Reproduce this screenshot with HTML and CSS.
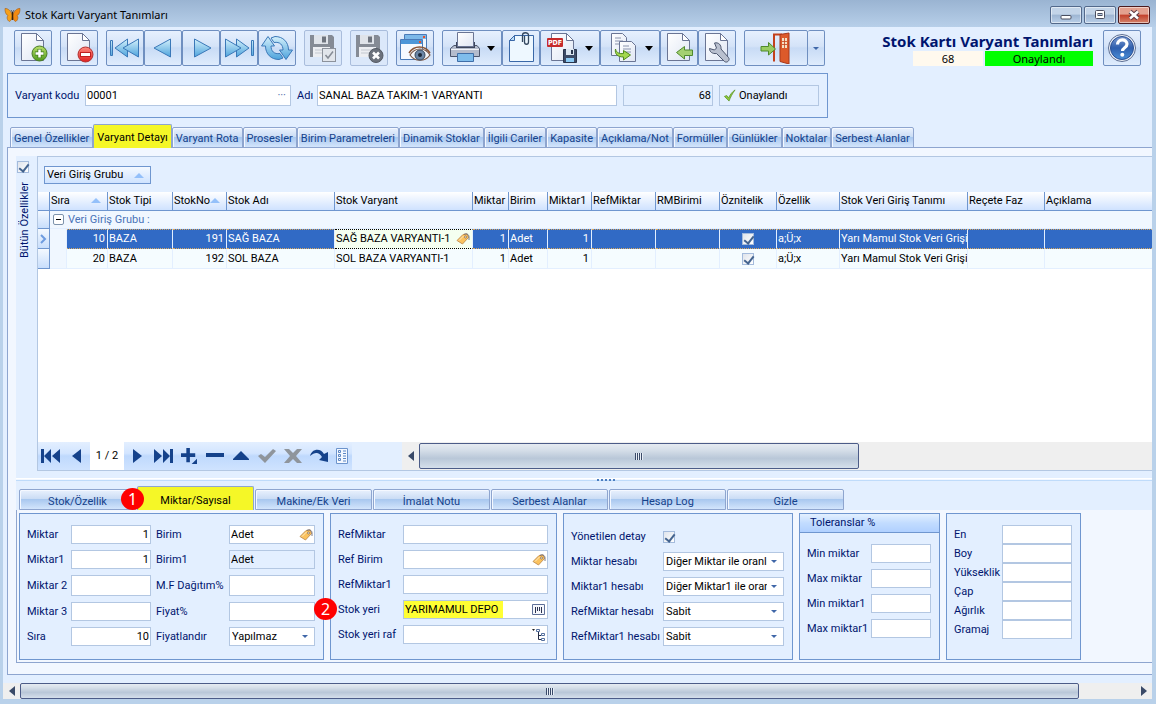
FILE: index.html
```html
<!DOCTYPE html>
<html lang="tr">
<head>
<meta charset="utf-8">
<title>Stok Kartı Varyant Tanımları</title>
<link rel="stylesheet" href="styles.css">
</head>
<body>
<svg class="defs" width="0" height="0" aria-hidden="true">
  <defs>
    <linearGradient id="page" x1="0" y1="0" x2="1" y2="1"><stop offset="0" stop-color="#fff"/><stop offset="1" stop-color="#dfe6f4"/></linearGradient>
    <linearGradient id="blue" x1="0" y1="0" x2="0" y2="1"><stop offset="0" stop-color="#d4f0fb"/><stop offset="1" stop-color="#4da3dc"/></linearGradient>
    <linearGradient id="green" x1="0" y1="0" x2="0" y2="1"><stop offset="0" stop-color="#b9e06a"/><stop offset="1" stop-color="#4f9a1c"/></linearGradient>
    <linearGradient id="red" x1="0" y1="0" x2="0" y2="1"><stop offset="0" stop-color="#ff8a80"/><stop offset="1" stop-color="#e02020"/></linearGradient>
    <linearGradient id="help" x1="0" y1="0" x2="0" y2="1"><stop offset="0" stop-color="#7d9bd0"/><stop offset=".5" stop-color="#2f5fae"/><stop offset="1" stop-color="#4a8fd8"/></linearGradient>
    <symbol id="sheet" viewBox="0 0 32 32"><path d="M4.500 1.500h15l7 7v20h-22z" fill="url(#page)" stroke="#6a7594"/><path d="M19.500 1.500v7h7z" fill="#fff" stroke="#6a7594"/></symbol>
    <symbol id="tag" viewBox="0 0 14 12"><path d="M1 7.500L7 1.500l4-.5 1.500 3.500-6 6.500z" fill="#fbc25e" stroke="#b98448" stroke-width=".8"/><path d="M3 7.500l4.500-4.500" stroke="#fdebc0"/><circle cx="9.500" cy="4" r="1" fill="#fff" stroke="#5c4a3a" stroke-width=".6"/><path d="M8 1.500c2-1.500 5-.5 5 2.500v3" fill="none" stroke="#5a5a6a" stroke-width=".8"/></symbol>
    <symbol id="floppy" viewBox="0 0 26 26"><path d="M1 1h22l2 2v20H1z" fill="#858b95"/><path d="M5 1h14v9H5z" fill="#dfe3e9"/><path d="M13 2.500h4v6h-4z" fill="#6e747e"/><path d="M4 13h17v10H4z" fill="#eceef2"/><path d="M6 16h12M6 19h12" stroke="#c3c8d0"/></symbol>
  </defs>
</svg>

<header class="titlebar">
  <svg class="logo" viewBox="0 0 16 16"><path d="M8 9C7 4 3 1 .5 1.500c0 3 .5 6 3 7C2 10 2.500 13.500 5 14.500 7 13.500 7.500 11 8 9z" fill="#f6a01a" stroke="#a35a10" stroke-width=".6"/><path d="M8 9c1-5 5-8 7.500-7.500 0 3-.5 6-3 7 1.500 1.500 1 5-1.500 6C9 13.500 8.500 11 8 9z" fill="#f28a12" stroke="#a35a10" stroke-width=".6"/><path d="M8 5v8" stroke="#3c2208" stroke-width="1.500" fill="none"/><path d="M6.500 3L8 5.500 9.500 3" stroke="#3c2208" stroke-width=".6" fill="none"/></svg>
  <span class="caption">Stok Kartı Varyant Tanımları</span>
  <div class="winbtns">
    <button class="winbtn" aria-label="Simge durumuna küçült"><svg viewBox="0 0 30 16"><rect x="10" y="8.500" width="10" height="3.500" rx="1" fill="#fff" stroke="#4a4f60"/></svg></button>
    <button class="winbtn" aria-label="Ekranı kapla"><svg viewBox="0 0 30 16"><rect x="10.500" y="3.500" width="9" height="8" rx="1" fill="#fff" stroke="#4a4f60"/><rect x="13" y="6.500" width="4" height="2" fill="#b7cbe3" stroke="#4a4f60"/></svg></button>
    <button class="winbtn close" aria-label="Kapat"><svg viewBox="0 0 30 16"><path d="M11 4.500l8 7M19 4.500l-8 7" stroke="#5a3a44" stroke-width="4.500"/><path d="M11 4.500l8 7M19 4.500l-8 7" stroke="#fff" stroke-width="2.500"/></svg></button>
  </div>
</header>

<main class="client">
  <div class="toolbar">
    <div class="group"><button class="tool" aria-label="Yeni"><svg viewBox="0 0 32 32"><use href="#sheet" width="32" height="32"/><circle cx="22.500" cy="21.500" r="7.500" fill="url(#green)" stroke="#4a7a2a"/><path d="M22.500 17v9M18 21.500h9" stroke="#3f7a18" stroke-width="4"/><path d="M22.500 17.500v8M18.500 21.500h8" stroke="#fff" stroke-width="2.500"/></svg></button></div>
    <div class="group"><button class="tool" aria-label="Sil"><svg viewBox="0 0 32 32"><use href="#sheet" width="32" height="32"/><circle cx="22.500" cy="22.500" r="7.500" fill="url(#red)" stroke="#b03030"/><rect x="17.500" y="20.500" width="10" height="4" fill="#fff" stroke="#c02020"/></svg></button></div>
    <div class="group">
      <button class="tool" aria-label="İlk"><svg viewBox="0 0 32 32"><g fill="url(#blue)" stroke="#3a78b8"><path d="M1.500 8.500h2v15h-2zM18.500 7v18L6 16z"/><path d="M29.500 7v18L14 16z"/></g></svg></button>
      <button class="tool" aria-label="Önceki"><svg viewBox="0 0 32 32"><path d="M23.500 7v18L7 16z" fill="url(#blue)" stroke="#3a78b8"/></svg></button>
      <button class="tool" aria-label="Sonraki"><svg viewBox="0 0 32 32"><path d="M9.500 7v18L26 16z" fill="url(#blue)" stroke="#3a78b8"/></svg></button>
      <button class="tool" aria-label="Son"><svg viewBox="0 0 32 32"><g fill="url(#blue)" stroke="#3a78b8"><path d="M28.500 8.500h2v15h-2zM13.500 7v18L26 16z"/><path d="M2.500 7v18L18 16z"/></g></svg></button>
      <button class="tool" aria-label="Yenile"><svg viewBox="0 0 32 32"><g fill="url(#blue)" stroke="#3a78b8" stroke-linejoin="round"><path d="M7 4.500L.5 14h4C4.500 22 10 27.500 18 27.500l4-1.500-3-4.500c-6 1-9-2.500-9-7.500h3.500z"/><path d="M25 27.500l6.500-9.500h-4C27.500 10 22 4.500 14 4.500L10 6l3 4.500c6-1 9 2.500 9 7.500h-3.500z"/></g></svg></button>
    </div>
    <div class="group"><button class="tool dim" aria-label="Kaydet" disabled><svg viewBox="0 0 32 32"><use href="#floppy" x="2" y="2" width="26" height="26"/><rect x="15.500" y="16.500" width="13" height="13" fill="#e1e5eb" stroke="#8c929c"/><path d="M18.500 23l2.500 3 5-6.500" fill="none" stroke="#858b95" stroke-width="1.500"/></svg></button></div>
    <div class="group"><button class="tool dim" aria-label="Vazgeç" disabled><svg viewBox="0 0 32 32"><use href="#floppy" x="2" y="2" width="26" height="26"/><circle cx="23" cy="23.500" r="7" fill="#6c727c" stroke="#555b65"/><path d="M20 20.500l6 6M26 20.500l-6 6" stroke="#fff" stroke-width="2.500"/></svg></button></div>
    <div class="group"><button class="tool" aria-label="Önizle"><svg viewBox="0 0 32 32"><path d="M5.500 2.500h22v20h-22z" fill="#eef6fd" stroke="#4a7ab8"/><path d="M6 3h21v4H6z" fill="#7db8e8"/><path d="M1.500 7.500h22v20h-22z" fill="#f6faff" stroke="#4a7ab8"/><path d="M2 8h21v4H2z" fill="#4d97d8"/><path d="M24 4h2v2h-2zM20 9h2v2h-2z" fill="#e8502a"/><path d="M11 23c5-8 15-8 20 0-5 7-15 7-20 0z" fill="#f4f6fa" stroke="#7e5a48" stroke-width="1.200"/><path d="M10 21c5-8 16-8 21 0" fill="none" stroke="#8a5638" stroke-width="1.500"/><circle cx="21" cy="23" r="5" fill="#6b86a6" stroke="#34465c"/><circle cx="21" cy="23" r="2" fill="#1c2838"/></svg></button></div>
    <div class="group">
      <button class="tool wide" aria-label="Yazdır"><svg viewBox="0 0 32 32"><path d="M5 13.500h23l2.500 3v8h-29v-8z" fill="#b4bccd" stroke="#4c566e"/><path d="M7 10h19v6H7z" fill="#3c465c"/><path d="M8.500.5h16v14h-16z" fill="url(#page)" stroke="#6a7594"/><path d="M2 17.500h28" stroke="#f0f3f8"/><path d="M8.500 21.500h16v8h-16z" fill="#7fbdec" stroke="#3f6ea8"/></svg><i class="caret"></i></button>
      <button class="tool" aria-label="Ekler"><svg viewBox="0 0 32 32"><path d="M9.500 3.500h19v26h-24v-21z" fill="#eef8ff" stroke="#3a68a8"/><path d="M9.500 3.500v5h-5z" fill="#bcdcf4" stroke="#3a68a8"/><path d="M19.500 4v6c0 3 4 3 4 0V3c0-3-6-3-6 0v7" fill="none" stroke="#33475f" stroke-width="1.300"/></svg></button>
      <button class="tool wide" aria-label="PDF kaydet"><svg viewBox="0 0 32 32"><use href="#sheet" width="32" height="32"/><rect x="0" y="6" width="16" height="9" rx="1" fill="#c62a2a"/><text x="8" y="13" class="pdf">PDF</text><path d="M16.500 17.500h13v13h-13z" fill="#3c4a66" stroke="#28344c"/><path d="M19 17h8v6h-8z" fill="#dbe6f2"/><path d="M19 26h8v4h-8z" fill="#8ccaf4"/><path d="M24 18h2v4h-2z" fill="#28344c"/></svg><i class="caret"></i></button>
      <button class="tool wide" aria-label="Kopyala"><svg viewBox="0 0 32 32"><path d="M4.500 1.500h11l4 4v18h-15z" fill="url(#page)" stroke="#6a7594"/><path d="M8 6h6M8 9h8M8 12h8" stroke="#8a93ac"/><path d="M12.500 9.500h12l4 4v16h-16z" fill="url(#page)" stroke="#6a7594"/><path d="M16 14h6M16 17h8M16 20h8" stroke="#8a93ac"/><path d="M8.500 17c1 4 4 5 8 4.500v-3l7 4.500-7 5v-3c-6 0-9-3-8-8z" fill="#a4d84e" stroke="#4f8a1c"/></svg><i class="caret"></i></button>
      <button class="tool" aria-label="İçe aktar"><svg viewBox="0 0 32 32"><use href="#sheet" width="32" height="32"/><path d="M13.500 20.500l8-6v3.500h8v5.500h-8v3.500z" fill="#a4d072" stroke="#4f8a2c"/></svg></button>
      <button class="tool" aria-label="Ayarlar"><svg viewBox="0 0 32 32"><use href="#sheet" width="32" height="32"/><path d="M8.500 16.500l5 1.500 2-2-2-5c4-1 7 2 6.500 6l7.500 8.500c2 2.500-1.500 6-4 4l-8-8c-4 .5-7-1.500-7-5z" fill="#b9c0cf" stroke="#4c566e" stroke-linejoin="round"/></svg></button>
    </div>
    <div class="group">
      <button class="tool exit" aria-label="Çıkış"><svg viewBox="0 0 32 32"><path d="M14 29.500V2.500h8" fill="none" stroke="#c4411c" stroke-width="2"/><path d="M20 2.500l9-1.500v31l-9-2.500z" fill="#dc5a2a" stroke="#a8381a"/><path d="M22 6h5v10h-5z" fill="#f6e0c4"/><path d="M24.500 6v10M22 9.500h5M22 12.500h5" stroke="#c4411c" stroke-width=".8"/><path d="M1 14.500h7.500v-4l7 6.500-7 6v-4H1z" fill="#98cc62" stroke="#4f8a2c"/></svg></button>
      <button class="tool drop" aria-label="Çıkış seçenekleri"><i class="caret small"></i></button>
    </div>
    <div class="status">
      <h1>Stok Kartı Varyant Tanımları</h1>
      <div class="badges"><span class="num">68</span><span class="ok">Onaylandı</span></div>
    </div>
    <button class="tool help" aria-label="Yardım"><svg viewBox="0 0 32 32"><circle cx="16" cy="16" r="13.500" fill="#eef2f8" stroke="#5a6c92"/><circle cx="16" cy="16" r="11.500" fill="url(#help)" stroke="#2a4f94"/><path d="M11.500 12.500c0-6 9.500-6 9.500-.5 0 4-4.500 3.500-4.500 7" fill="none" stroke="#fff" stroke-width="3.200"/><circle cx="16.300" cy="22.800" r="2" fill="#fff"/></svg></button>
  </div>

  <section class="keybox">
    <label for="kod">Varyant kodu</label>
    <div class="field kod"><input id="kod" value="00001"><span class="dots">···</span></div>
    <label for="adi">Adı</label>
    <div class="field adi"><input id="adi" value="SANAL BAZA TAKIM-1 VARYANTI"></div>
    <div class="field ro no"><input class="right" value="68" readonly aria-label="Numara"></div>
    <div class="field ro onay"><svg viewBox="0 0 14 14"><path d="M1.500 8l2.500-1 2 2.500C8 5.500 10 3 13 1c-3 4-5 8-6.500 12z" fill="#8cc63c" stroke="#5c9426" stroke-width=".8"/></svg><span>Onaylandı</span></div>
  </section>

  <nav class="tabs">
    <button class="tab">Genel Özellikler</button><button class="tab active">Varyant Detayı</button><button class="tab">Varyant Rota</button><button class="tab">Prosesler</button><button class="tab">Birim Parametreleri</button><button class="tab">Dinamik Stoklar</button><button class="tab">İlgili Cariler</button><button class="tab">Kapasite</button><button class="tab">Açıklama/Not</button><button class="tab">Formüller</button><button class="tab">Günlükler</button><button class="tab">Noktalar</button><button class="tab">Serbest Alanlar</button>
  </nav>

  <section class="page">
    <div class="upper">
      <div class="side"><input type="checkbox" id="all" checked><label for="all">Bütün Özellikler</label></div>
      <div class="gridbox">
        <div class="grouppanel"><button class="groupby">Veri Giriş Grubu <i class="sort"></i></button></div>
        <div class="gridbody">
          <table class="grid">
            <colgroup><col class="w12"><col class="w17"><col class="w41"><col class="w65"><col class="w54"><col class="w108"><col class="w138"><col class="w36"><col class="w39"><col class="w44"><col class="w64"><col class="w64"><col class="w57"><col class="w63"><col class="w128"><col class="w77"><col></colgroup>
            <thead><tr><th></th><th colspan="2" class="sorted">Sıra<i class="sort"></i></th><th>Stok Tipi</th><th class="sorted">StokNo<i class="sort"></i></th><th>Stok Adı</th><th>Stok Varyant</th><th>Miktar</th><th>Birim</th><th>Miktar1</th><th>RefMiktar</th><th>RMBirimi</th><th>Öznitelik</th><th>Özellik</th><th>Stok Veri Giriş Tanımı</th><th>Reçete Faz</th><th>Açıklama</th></tr></thead>
            <tbody>
              <tr class="grouprow"><td class="ind"></td><td colspan="16"><div class="grouphead"><button class="toggle" aria-label="Daralt"></button>Veri Giriş Grubu :</div></td></tr>
              <tr class="selected"><td class="ind"><svg viewBox="0 0 8 10"><path d="M2 1l4 4-4 4" fill="none" stroke="#6d9be0" stroke-width="2"/></svg></td><td class="gap"></td><td class="r">10</td><td>BAZA</td><td class="r">191</td><td>SAĞ BAZA</td><td class="focus"><div class="withicon">SAĞ BAZA VARYANTI-1<svg class="tagicon"><use href="#tag"/></svg></div></td><td class="r">1</td><td>Adet</td><td class="r">1</td><td></td><td></td><td class="c"><input type="checkbox" checked aria-label="Öznitelik"></td><td>a;Ü;x</td><td>Yarı Mamul Stok Veri Grişi</td><td></td><td></td></tr>
              <tr class="plain"><td class="ind"></td><td class="gap"></td><td class="r">20</td><td>BAZA</td><td class="r">192</td><td>SOL BAZA</td><td>SOL BAZA VARYANTI-1</td><td class="r">1</td><td>Adet</td><td class="r">1</td><td></td><td></td><td class="c"><input type="checkbox" checked aria-label="Öznitelik"></td><td>a;Ü;x</td><td>Yarı Mamul Stok Veri Grişi</td><td></td><td></td></tr>
            </tbody>
          </table>
        </div>
        <div class="footer">
          <div class="navigator">
            <button aria-label="İlk kayıt"><svg viewBox="0 0 20 16"><path d="M0 1h3v14H0zM3 8l7-7v14zM11 8l8-7v14z"/></svg></button>
            <button aria-label="Önceki kayıt"><svg viewBox="0 0 20 16"><path d="M5 8l9-7v14z"/></svg></button>
            <span class="pos">1 / 2</span>
            <button aria-label="Sonraki kayıt"><svg viewBox="0 0 20 16"><path d="M15 8L6 1v14z"/></svg></button>
            <button aria-label="Son kayıt"><svg viewBox="0 0 20 16"><path d="M17 1h3v14h-3zM17 8l-7-7v14zM9 8L1 1v14z"/></svg></button>
            <button aria-label="Ekle"><svg viewBox="0 0 20 18"><path d="M7 0h4v6h6v4h-6v6H7v-6H1V6h6zM19 12v6h-6z"/></svg></button>
            <button aria-label="Çıkar"><svg viewBox="0 0 20 16"><path d="M1 5h18v4H1z"/></svg></button>
            <button aria-label="Düzenle"><svg viewBox="0 0 20 16"><path d="M10 3l8 8v1H2v-1z"/></svg></button>
            <button class="off" aria-label="Onayla"><svg viewBox="0 0 20 16"><path d="M1 8l3-2 4 3 8-8 3 2-11 12z"/></svg></button>
            <button class="off" aria-label="İptal"><svg viewBox="0 0 20 16"><path d="M1 1h5l4 4 4-4h5l-6 7 6 7h-5l-4-4-4 4H1l6-7z"/></svg></button>
            <button aria-label="Yenile"><svg viewBox="0 0 20 16"><path d="M1 8C3 0 12 0 15 6l4-2v10l-9-2 3-3C10 4 6 4 1 8z"/></svg></button>
            <button class="last" aria-label="Görünüm"><svg viewBox="0 0 20 16"><path d="M4.500.5h11v15h-11z" fill="#f4f8ff" stroke="#6d94cc"/><path d="M6.500 2.500h2v2h-2zM6.500 6.500h2v2h-2zM6.500 10.500h2v2h-2zM11 3h3M11 5.500h3M11 8h3M11 10.500h3M11 13h3" fill="none" stroke="#5b86c4"/></svg></button>
          </div>
          <div class="hscroll inner"><button class="arrow" aria-label="Sola kaydır"><svg viewBox="0 0 6 10"><path d="M6 0v10L0 5z"/></svg></button><div class="track"><div class="thumb"><i class="grip"></i></div></div></div>
        </div>
      </div>
    </div>

    <div class="splitter"><i></i><i></i><i></i><i></i><i></i></div>

    <nav class="tabs lower">
      <button class="tab">Stok/Özellik</button><button class="tab active">Miktar/Sayısal</button><button class="tab">Makine/Ek Veri</button><button class="tab">İmalat Notu</button><button class="tab">Serbest Alanlar</button><button class="tab">Hesap Log</button><button class="tab">Gizle</button>
      <span class="marker one">1</span>
    </nav>
    <div class="forms">
      <fieldset class="box qty">
        <label for="m0">Miktar</label><div class="field"><input id="m0" class="right" value="1"></div>
        <label for="b0">Birim</label><div class="field"><input id="b0" value="Adet"><svg class="tagicon"><use href="#tag"/></svg></div>
        <label for="m1">Miktar1</label><div class="field"><input id="m1" class="right" value="1"></div>
        <label for="b1">Birim1</label><div class="field ro"><input id="b1" value="Adet" readonly></div>
        <label for="m2">Miktar 2</label><div class="field"><input id="m2"></div>
        <label for="mf">M.F Dağıtım%</label><div class="field"><input id="mf"></div>
        <label for="m3">Miktar 3</label><div class="field"><input id="m3"></div>
        <label for="fy">Fiyat%</label><div class="field"><input id="fy"></div>
        <label for="sr">Sıra</label><div class="field"><input id="sr" class="right" value="10"></div>
        <label for="fl">Fiyatlandır</label><div class="field pick"><select id="fl"><option>Yapılmaz</option></select><i class="caret small"></i></div>
      </fieldset>
      <fieldset class="box ref">
        <label for="r0">RefMiktar</label><div class="field"><input id="r0"></div>
        <label for="r1">Ref Birim</label><div class="field"><input id="r1"><svg class="tagicon"><use href="#tag"/></svg></div>
        <label for="r2">RefMiktar1</label><div class="field"><input id="r2"></div>
        <label for="r3">Stok yeri</label><div class="field"><input id="r3" class="marked" value="YARIMAMUL DEPO"><svg class="fieldicon" viewBox="0 0 14 12"><path d="M.5.5h12v10H.5z" fill="#f5f7fc" stroke="#5f7098"/><path d="M3.500 3v6M5.500 3v4M7.500 3v4M9.500 3v6" stroke="#2c3350"/></svg></div>
        <label for="r4">Stok yeri raf</label><div class="field"><input id="r4"><svg class="fieldicon" viewBox="0 0 14 12"><path d="M0 0h3L1.500 2z" fill="#222"/><path d="M6.500 2v8.500H9M6.500 6.500H9" fill="none" stroke="#222b44"/><path d="M4.500.5h3v2h-3zM9.500 4.500h3v2h-3zM9.500 9.500h3v2h-3z" fill="#fff" stroke="#55709f"/></svg></div>
        <span class="marker two">2</span>
      </fieldset>
      <fieldset class="box calc">
        <label for="yd">Yönetilen detay</label><div><input type="checkbox" id="yd" checked></div>
        <label for="h0">Miktar hesabı</label><div class="field pick"><select id="h0"><option>Diğer Miktar ile oranlı</option></select><i class="caret small"></i></div>
        <label for="h1">Miktar1 hesabı</label><div class="field pick"><select id="h1"><option>Diğer Miktar1 ile oranlı</option></select><i class="caret small"></i></div>
        <label for="h2">RefMiktar hesabı</label><div class="field pick"><select id="h2"><option>Sabit</option></select><i class="caret small"></i></div>
        <label for="h3">RefMiktar1 hesabı</label><div class="field pick"><select id="h3"><option>Sabit</option></select><i class="caret small"></i></div>
      </fieldset>
      <section class="box tol">
        <h2>Toleranslar %</h2>
        <div class="tolgrid">
          <label for="t0">Min miktar</label><div class="field"><input id="t0"></div>
          <label for="t1">Max miktar</label><div class="field"><input id="t1"></div>
          <label for="t2">Min miktar1</label><div class="field"><input id="t2"></div>
          <label for="t3">Max miktar1</label><div class="field"><input id="t3"></div>
        </div>
      </section>
      <fieldset class="box dim3">
        <label for="d0">En</label><div class="field"><input id="d0"></div>
        <label for="d1">Boy</label><div class="field"><input id="d1"></div>
        <label for="d2">Yükseklik</label><div class="field"><input id="d2"></div>
        <label for="d3">Çap</label><div class="field"><input id="d3"></div>
        <label for="d4">Ağırlık</label><div class="field"><input id="d4"></div>
        <label for="d5">Gramaj</label><div class="field"><input id="d5"></div>
      </fieldset>
    </div>
  </section>

  <div class="hscroll outer"><button class="arrow" aria-label="Sola kaydır"><svg viewBox="0 0 6 10"><path d="M6 0v10L0 5z"/></svg></button><div class="track"><div class="thumb"><i class="grip"></i></div></div><button class="arrow" aria-label="Sağa kaydır"><svg viewBox="0 0 6 10"><path d="M0 0v10l6-5z"/></svg></button></div>
</main>
</body>
</html>
```

FILE: styles.css
```css
* { box-sizing: border-box; }
body {
  --line: #8ea5cf;
  --box: #6f96cf;
  --edge: #b3c7e2;
  --pale: #e3efff;
  --navy: #00156e;
  margin: 0;
  min-height: 100vh;
  display: flex;
  flex-direction: column;
  background: #b9d1ea;
  font: 11px/14px Roboto, Tahoma, sans-serif;
  color: #000;
}
button, input, select { font: inherit; color: inherit; margin: 0; }
button { padding: 0; border: 0; background: none; }
.defs { position: absolute; }

.titlebar {
  display: flex;
  align-items: center;
  height: 27px;
  padding: 3px 6px 0 4px;
  background: linear-gradient(#9ab4d2, #b7cfe9);
}
.logo { width: 17px; height: 16px; }
.caption { flex: 1; padding-left: 4px; font-family: "Noto Sans", sans-serif; }
.winbtns { display: flex; gap: 2px; }
.winbtn {
  width: 32px;
  height: 18px;
  border: 1px solid #53698b;
  border-radius: 2px;
  box-shadow: inset 0 0 0 1px rgba(255,255,255,.5);
  background: linear-gradient(#c3d4e8 45%, #9db5d2 50%, #b9cfe8);
}
.winbtn.close { border-color: #4b1a1e; background: linear-gradient(#e3a08f 45%, #c3402b 50%, #d4836a); }
.winbtn svg { display: block; width: 30px; height: 16px; }

.client {
  flex: 1;
  display: flex;
  flex-direction: column;
  margin: 0 4px 5px 3px;
  background: var(--pale);
}
.toolbar { display: flex; gap: 8px; padding: 3px 11px 7px 11px; }
.group { display: flex; }
.tool {
  display: flex;
  align-items: center;
  justify-content: center;
  width: 38px;
  height: 36px;
  border: 1px solid #6f8fc0;
  border-radius: 2px;
  background: linear-gradient(#e6f0fe, #d4e3f8 45%, #c8dbf5 50%, #dfecfd);
}
.tool svg { width: 32px; height: 32px; }
.tool.wide { width: 60px; gap: 6px; }
.tool.exit { width: 64px; }
.tool.drop { width: 17px; border-left: 0; }
.tool.dim { border-color: #a9bddc; background: #dbe8fa; }
.pdf { font: bold 7px "DejaVu Sans Condensed", sans-serif; fill: #fff; text-anchor: middle; }
.caret { width: 0; height: 0; border: 4px solid transparent; border-top: 5px solid #000; border-bottom: 0; }
.caret.small { border-width: 3px 3px 0; border-top-color: #3f67a8; }
.status { margin-left: auto; margin-right: 2px; text-align: right; }
.status h1 { margin: 0; padding-top: 2px; font: bold 15px/19px "Noto Sans", sans-serif; color: var(--navy); }
.badges { display: flex; gap: 2px; justify-content: flex-end; text-align: center; line-height: 15px; font-family: "Noto Sans", sans-serif; }
.num { width: 70px; background: #fff9ee; }
.ok { width: 108px; background: #00ff00; }

.keybox {
  display: flex;
  align-items: center;
  gap: 6px;
  align-self: flex-start;
  height: 45px;
  margin-left: 4px;
  padding: 0 8px 0 7px;
  border: 1px solid var(--box);
}
label { color: var(--navy); white-space: nowrap; }
.keybox label { width: 14px; }
.keybox label:first-child { width: 64px; }
.keybox .field { height: 21px; }
.field {
  display: flex;
  align-items: center;
  border: 1px solid var(--edge);
  background: #fff;
  min-width: 0;
}
.field.ro { background: var(--pale); }
.field input { flex: 1; min-width: 0; width: 100%; height: 100%; padding: 0 1px 0 1px; border: 0; background: none; outline: 0; }
.field input.right { text-align: right; }
.field.kod { width: 206px; }
.field.adi { width: 300px; }
.field.no { width: 90px; }
.field.onay { width: 100px; padding-left: 3px; gap: 3px; }
.onay svg { width: 13px; height: 13px; }
.dots { padding-right: 4px; color: #3f67a8; }

.tabs {
  position: relative;
  z-index: 1;
  display: flex;
  align-items: flex-end;
  height: 24px;
  margin: 6px 0 -1px 7px;
}
.tab {
  height: 21px;
  padding: 2px 3px 0;
  border: 1px solid var(--line);
  border-radius: 2px 2px 0 0;
  box-shadow: inset 1px 1px 0 #f4f8ff;
  background: linear-gradient(#e9f1fd, #cbddf5 45%, #a9c8ef 50%, #d3e5fc);
  color: #15428b;
  white-space: nowrap;
}
.tab.active {
  height: 24px;
  border-bottom: 0;
  background: #f5f727;
  color: #000;
  box-shadow: none;
}
.page {
  flex: 1;
  display: flex;
  flex-direction: column;
  margin: 0 0 8px 4px;
  padding: 8px 0 11px 8px;
  border: 1px solid var(--line);
  border-right: 0;
  background: #f2f7ff;
}
.upper { flex: 1; display: flex; min-height: 0; background: var(--pale); }
.side { display: flex; flex-direction: column; align-items: center; gap: 9px; width: 21px; padding: 5px 8px 0 0; }
.side label { writing-mode: vertical-rl; transform: rotate(180deg); margin-left: 4px; }
.side input { margin-left: 1px; }
input[type=checkbox] {
  appearance: none;
  flex: none;
  display: block;
  width: 12px;
  height: 12px;
  border: 1px solid #a4bbdc;
  background: #fff linear-gradient(135deg, #dfe4ec, #fff);
  position: relative;
}
input[type=checkbox]:checked::after {
  content: "";
  position: absolute;
  left: 3px;
  top: 0;
  width: 4px;
  height: 8px;
  border: solid #44648f;
  border-width: 0 2px 2px 0;
  transform: rotate(38deg);
}
.gridbox { flex: 1; min-width: 0; display: flex; flex-direction: column; border: 1px solid var(--edge); border-right: 0; }
.grouppanel { height: 35px; padding: 9px 0 0 6px; }
.groupby {
  display: flex;
  align-items: center;
  justify-content: space-between;
  width: 107px;
  height: 18px;
  padding: 0 6px 0 2px;
  border: 1px solid var(--box);
  background: linear-gradient(#f4f9ff, #cfe3ff);
  white-space: nowrap;
}
.sort { width: 0; height: 0; border: 5px solid transparent; border-top: 0; border-bottom: 5px solid #94c0fa; }
.gridbody { flex: 1; background: #fff; }
.grid { width: 100%; table-layout: fixed; border-collapse: separate; border-spacing: 0; }
.w12 { width: 12px; } .w17 { width: 17px; } .w36 { width: 36px; } .w39 { width: 39px; }
.w41 { width: 41px; } .w44 { width: 44px; } .w54 { width: 54px; } .w57 { width: 57px; }
.w63 { width: 63px; } .w64 { width: 64px; } .w65 { width: 65px; } .w77 { width: 77px; }
.w108 { width: 108px; } .w128 { width: 128px; } .w138 { width: 138px; }
.grid th, .grid td { padding: 0 1px; overflow: hidden; white-space: nowrap; text-align: left; font-weight: normal; }
.grid th {
  height: 19px;
  border-right: 1px solid var(--box);
  border-bottom: 1px solid var(--box);
  background: linear-gradient(#fff, #cfe2ff);
}
.grid th:last-child, .grid td:last-child { border-right: 0; }
.grid th.sorted { position: relative; padding-right: 16px; }
.sorted .sort { position: absolute; right: 6px; top: 6px; border-width: 0 5px 5px; }
.grid td { height: 20px; border-right: 1px solid var(--pale); border-bottom: 1px solid var(--pale); background: #f5fcff; }
.grid td.ind { padding: 0 1px; border-right: 1px solid var(--box); border-bottom: 1px solid var(--box); background: linear-gradient(#f4f9ff, #c8defc); }
.ind svg { display: block; width: 8px; height: 10px; }
.grid .grouprow td { height: 18px; color: #4a73b8; background: #f0f7ff; }
.grid .grouprow td.ind { background: linear-gradient(#f4f9ff, #c8defc); }
.grouphead { display: flex; align-items: center; gap: 4px; padding-left: 2px; }
.toggle { width: 11px; height: 11px; border: 1px solid #7d93ac; border-radius: 2px; background: linear-gradient(#000, #000) center / 5px 1px no-repeat #fff; }
.grid td.gap { background: #f0f7ff; }
.grid td.r { text-align: right; padding-right: 2px; }
.grid td.c input { margin: 0 auto; }
.grid .selected td { border-top: 1px dotted #d8a860; border-bottom: 1px dotted #d8a860; background: #316ac5; color: #fff; }
.grid .selected td.ind { border-top: 0; border-bottom: 1px solid var(--box); background: linear-gradient(#f4f9ff, #c8defc); }
.grid .selected td.gap { border-top: 0; border-bottom: 0; background: #f0f7ff; }
.grid .selected td.focus { border-top: 1px dotted #000; border-bottom: 1px dotted #000; background: #f5fff0; color: #000; }
.withicon { display: flex; align-items: center; justify-content: space-between; }
.tagicon, .fieldicon { flex: none; width: 14px; height: 12px; margin-right: 1px; }

.footer { display: flex; gap: 50px; height: 28px; }
.navigator { display: flex; align-items: center; background: linear-gradient(#e3efff, #d3e5ff 40%, #bfd9fd 50%, #cfe3ff); height: 28px; }
.navigator button { width: 26px; height: 28px; display: flex; align-items: center; justify-content: center; }
.navigator .last { width: 20px; }
.navigator svg { width: 20px; height: 16px; fill: #15428b; }
.navigator .off svg { fill: #8f959c; }
.pos { width: 34px; height: 28px; background: #fff; line-height: 28px; text-align: center; }
.hscroll { display: flex; background: #efefef; }
.hscroll .arrow { display: flex; align-items: center; justify-content: center; width: 17px; }
.arrow svg { width: 6px; height: 10px; fill: #3a4a68; }
.inner { flex: 1; }
.track { flex: 1; display: flex; }
.thumb {
  display: flex;
  align-items: center;
  justify-content: center;
  width: 60%;
  border: 1px solid #4c5c88;
  border-radius: 2px;
  background: linear-gradient(#e6ebf1, #d6dfe9 25%, #b9c7d8 60%, #d5dfeb);
}
.inner .thumb { height: 26px; margin-top: 1px; }
.grip { width: 8px; height: 7px; background: repeating-linear-gradient(90deg, #3a4a68 0 1px, #e8eef6 1px 2px); }
.outer { height: 16px; }
.outer .thumb { width: 95%; }

.splitter {
  display: flex;
  align-items: flex-end;
  justify-content: center;
  gap: 2px;
  height: 11px;
  padding: 0 0 1px 44px;
  background: linear-gradient(var(--pale) 7px, #fff 7px 8px, #f2f7ff 8px 9px, #bfdbfa 9px 10px, var(--pale) 10px);
}
.splitter i { width: 2px; height: 2px; background: #4c7ec0; }

.tabs.lower { gap: 1px; height: 28px; margin: 0 0 -1px 0; padding: 0 0 0 3px; background: var(--pale); }
.lower .tab { width: 117px; padding-top: 4px; }
.marker {
  position: absolute;
  width: 23px;
  height: 22px;
  border-radius: 50%;
  background: #f00;
  color: #fff;
  font: 16px/22px "Noto Sans", sans-serif;
  text-align: center;
}
.marker.one { left: 105px; bottom: 0; }
.marker.two { left: -17px; top: 84px; }
.forms {
  display: flex;
  gap: 6px;
  padding: 3px 2px 2px;
  border: 1px solid var(--line);
  border-right: 0;
  background: #f2f7ff;
}
.box { position: relative; min-width: 0; margin: 0; padding: 11px 8px 13px 7px; border: 1px solid var(--box); background: var(--pale); }
.qty, .ref, .calc, .tolgrid, .dim3 { display: grid; align-items: center; grid-auto-rows: 19px; row-gap: 6px; }
.box .field { align-self: stretch; }
.qty { grid-template-columns: 44px 80px 78px 86px; grid-template-rows: 19px 19px 21px 19px 19px; }
.qty label:nth-of-type(even) { padding-left: 5px; }
.ref { grid-template-columns: 65px 145px; }
.box.calc { grid-template-columns: 92px 121px; padding-top: 13px; }
.box.tol { padding: 0; }
.tol h2 { margin: 0; height: 19px; padding-left: 10px; border-bottom: 1px solid var(--box); background: linear-gradient(#e3f0ff, #c2dcff 50%, #b0d0ff); color: var(--navy); font: inherit; line-height: 18px; }
.tolgrid { grid-template-columns: 64px 60px; padding: 11px 8px 0 7px; }
.dim3 { grid-template-columns: 48px 70px; row-gap: 0; }
.pick { position: relative; }
.pick select { appearance: none; width: 100%; height: 100%; padding: 0 16px 0 2px; border: 0; background: none; outline: 0; overflow: hidden; text-overflow: clip; }
.pick .caret { position: absolute; right: 6px; pointer-events: none; }
.field input.marked { flex: none; width: 99px; background: #ffff33; }
.marked + .fieldicon { margin-left: auto; }
```
